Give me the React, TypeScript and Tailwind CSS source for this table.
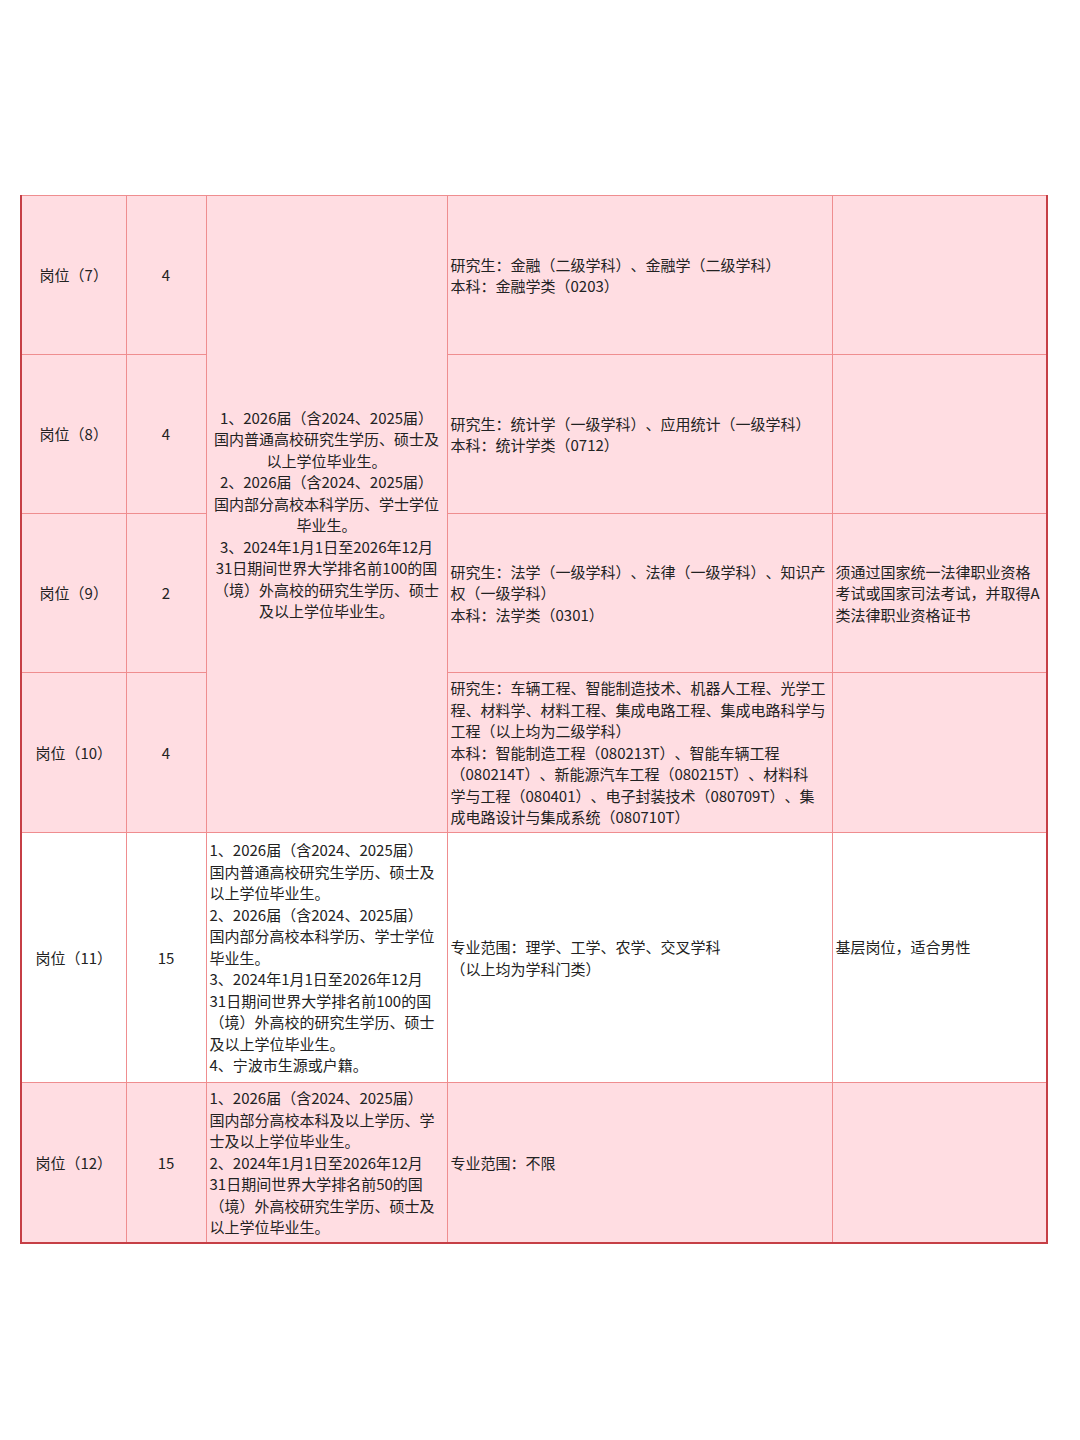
import React from "react";

const L = ({ lines, center }: { lines: string[]; center?: boolean }) => (
  <div className={center ? "text-center" : "text-left"}>
    {lines.map((l, i) => (
      <div key={i} className="whitespace-nowrap h-[21.5px]">
        {l || "\u00a0"}
      </div>
    ))}
  </div>
);

const td = "border border-[#ef8d8f] align-middle p-0";

export default function App() {
  const pink = "bg-[#ffdde2]";
  const white = "bg-white";
  return (
    <div
      className="w-[1080px] h-[1440px] bg-white pt-[195px] pl-[20px] text-[15px] leading-[21.5px] text-[#222] [text-spacing-trim:space-all] [font-feature-settings:'halt'_0]"
      style={{ fontFamily: '"Noto Sans CJK SC", "Noto Sans", sans-serif' }}
    >
      <table className="table-fixed border-collapse w-[1026px] border-2 border-[#c63f46] border-t-[#ef8d8f] border-t">
        <colgroup>
          <col className="w-[105px]" />
          <col className="w-[80px]" />
          <col className="w-[241px]" />
          <col className="w-[385px]" />
          <col className="w-[215px]" />
        </colgroup>
        <tbody>
          <tr className={`h-[159px] ${pink}`}>
            <td className={`${td} text-center`}>岗位（7）</td>
            <td className={`${td} text-center`}>4</td>
            <td className={`${td} px-[5px]`} rowSpan={4}>
              <L
                center
                lines={[
                  "1、2026届（含2024、2025届）",
                  "国内普通高校研究生学历、硕士及",
                  "以上学位毕业生。",
                  "2、2026届（含2024、2025届）",
                  "国内部分高校本科学历、学士学位",
                  "毕业生。",
                  "3、2024年1月1日至2026年12月",
                  "31日期间世界大学排名前100的国",
                  "（境）外高校的研究生学历、硕士",
                  "及以上学位毕业生。",
                ]}
              />
            </td>
            <td className={`${td} px-[3px]`}>
              <L lines={["研究生：金融（二级学科）、金融学（二级学科）", "本科：金融学类（0203）"]} />
            </td>
            <td className={td}></td>
          </tr>
          <tr className={`h-[159px] ${pink}`}>
            <td className={`${td} text-center`}>岗位（8）</td>
            <td className={`${td} text-center`}>4</td>
            <td className={`${td} px-[3px]`}>
              <L lines={["研究生：统计学（一级学科）、应用统计（一级学科）", "本科：统计学类（0712）"]} />
            </td>
            <td className={td}></td>
          </tr>
          <tr className={`h-[159px] ${pink}`}>
            <td className={`${td} text-center`}>岗位（9）</td>
            <td className={`${td} text-center`}>2</td>
            <td className={`${td} px-[3px]`}>
              <L
                lines={[
                  "研究生：法学（一级学科）、法律（一级学科）、知识产",
                  "权（一级学科）",
                  "本科：法学类（0301）",
                ]}
              />
            </td>
            <td className={`${td} px-[3px]`}>
              <L lines={["须通过国家统一法律职业资格", "考试或国家司法考试，并取得A", "类法律职业资格证书"]} />
            </td>
          </tr>
          <tr className={`h-[160px] ${pink}`}>
            <td className={`${td} text-center`}>岗位（10）</td>
            <td className={`${td} text-center`}>4</td>
            <td className={`${td} px-[3px]`}>
              <L
                lines={[
                  "研究生：车辆工程、智能制造技术、机器人工程、光学工",
                  "程、材料学、材料工程、集成电路工程、集成电路科学与",
                  "工程（以上均为二级学科）",
                  "本科：智能制造工程（080213T）、智能车辆工程",
                  "（080214T）、新能源汽车工程（080215T）、材料科",
                  "学与工程（080401）、电子封装技术（080709T）、集",
                  "成电路设计与集成系统（080710T）",
                ]}
              />
            </td>
            <td className={td}></td>
          </tr>
          <tr className={`h-[250px] ${white}`}>
            <td className={`${td} text-center`}>岗位（11）</td>
            <td className={`${td} text-center`}>15</td>
            <td className={`${td} px-[3px]`}>
              <L
                lines={[
                  "1、2026届（含2024、2025届）",
                  "国内普通高校研究生学历、硕士及",
                  "以上学位毕业生。",
                  "2、2026届（含2024、2025届）",
                  "国内部分高校本科学历、学士学位",
                  "毕业生。",
                  "3、2024年1月1日至2026年12月",
                  "31日期间世界大学排名前100的国",
                  "（境）外高校的研究生学历、硕士",
                  "及以上学位毕业生。",
                  "4、宁波市生源或户籍。",
                ]}
              />
            </td>
            <td className={`${td} px-[3px]`}>
              <L lines={["专业范围：理学、工学、农学、交叉学科", "（以上均为学科门类）"]} />
            </td>
            <td className={`${td} px-[3px]`}>
              <L lines={["基层岗位，适合男性", ""]} />
            </td>
          </tr>
          <tr className={`h-[160px] ${pink}`}>
            <td className={`${td} text-center`}>岗位（12）</td>
            <td className={`${td} text-center`}>15</td>
            <td className={`${td} px-[3px]`}>
              <L
                lines={[
                  "1、2026届（含2024、2025届）",
                  "国内部分高校本科及以上学历、学",
                  "士及以上学位毕业生。",
                  "2、2024年1月1日至2026年12月",
                  "31日期间世界大学排名前50的国",
                  "（境）外高校研究生学历、硕士及",
                  "以上学位毕业生。",
                ]}
              />
            </td>
            <td className={`${td} px-[3px]`}>专业范围：不限</td>
            <td className={td}></td>
          </tr>
        </tbody>
      </table>
    </div>
  );
}
